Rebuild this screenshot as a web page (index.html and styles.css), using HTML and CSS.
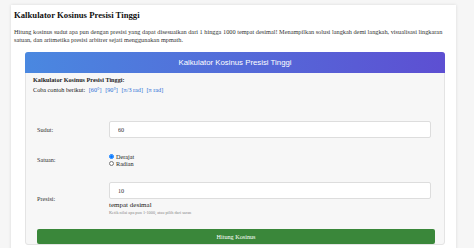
FILE: index.html
```html
<!DOCTYPE html>
<html lang="id">
<head>
<meta charset="UTF-8" />
<meta name="viewport" content="width=device-width, initial-scale=1" />
<title>Kalkulator Kosinus Presisi Tinggi</title>
<link rel="stylesheet" href="styles.css">
</head>
<body>

<div class="page">
  <h1>Kalkulator Kosinus Presisi Tinggi</h1>
  <p class="intro">Hitung kosinus sudut apa pun dengan presisi yang dapat disesuaikan dari 1 hingga 1000 tempat desimal! Menampilkan solusi langkah demi langkah, visualisasi lingkaran satuan, dan aritmetika presisi arbitrer sejati menggunakan mpmath.</p>

  <div class="calc">
    <div class="calc-head">Kalkulator Kosinus Presisi Tinggi</div>
    <div class="calc-body">
      <p class="hint">
        <strong>Kalkulator Kosinus Presisi Tinggi:</strong><br>
        Coba contoh berikut: <a href="#">[60°]</a> <a href="#">[90°]</a> <a href="#">[π/3 rad]</a> <a href="#">[π rad]</a>
      </p>

      <form class="form">
        <div class="row">
          <label for="angle">Sudut:</label>
          <input id="angle" type="text" value="60">
        </div>
        <div class="row">
          <label>Satuan:</label>
          <div class="radios">
            <label class="radio"><input type="radio" name="unit" checked> Derajat</label>
            <label class="radio"><input type="radio" name="unit"> Radian</label>
          </div>
        </div>
        <div class="row">
          <label for="prec">Presisi:</label>
          <div>
            <input id="prec" type="text" value="10">
            <div class="unit">tempat desimal</div>
            <div class="small">Ketik nilai apa pun 1-1000, atau pilih dari saran</div>
          </div>
        </div>
        <button type="button" class="btn">Hitung Kosinus</button>
      </form>
    </div>
  </div>
</div>

</body>
</html>
```

FILE: styles.css
```css
body {
  margin: 0;
  padding: 5px 18px 0 11px;
  background-color: #f6f6f6;
  font-family: "Liberation Serif", "Times New Roman", serif;
  color: #222;
}
.page {
  background-color: #fff;
  box-shadow: 0 0 3px rgba(0, 0, 0, 0.12);
  padding: 4px 0 0 3px;
  min-height: 260px;
}
h1 {
  font-size: 8.7px;
  margin: 0 0 8px;
  padding-top: 1px;
  color: #111;
}
.intro {
  font-size: 6.3px;
  line-height: 8.3px;
  margin: 0 4px 7px 0;
  color: #333;
}
.calc {
  margin: 0 11px 0 11px;
  background-color: #f7f7f7;
  border: 1px solid #e4e4e4;
  border-radius: 3px;
}
.calc-head {
  height: 21px;
  line-height: 21px;
  margin: -1px -1px 0;
  border-radius: 3px 3px 0 0;
  background: linear-gradient(to right, #4a88e0, #5d4fd2);
  color: #fff;
  text-align: center;
  font-family: "Liberation Sans", Arial, sans-serif;
  font-size: 7.8px;
}
.calc-body {
  padding: 2px 11px 0 7px;
}
.hint {
  font-size: 6.2px;
  line-height: 10px;
  margin: 0 0 26px;
}
.hint a {
  color: #2a6fd6;
  text-decoration: none;
  margin-left: 2px;
}
.form {
  padding-left: 4px;
  font-size: 6.2px;
}
.row {
  display: grid;
  grid-template-columns: 72px 1fr;
  align-items: center;
  margin-bottom: 15px;
  padding-right: 2px;
}
.row > label {
  color: #333;
}
.row input[type="text"] {
  box-sizing: border-box;
  width: 100%;
  height: 17px;
  border: 1px solid #ddd;
  border-radius: 2px;
  padding: 0 8px;
  font-family: inherit;
  font-size: 6.2px;
  color: #333;
  background-color: #fff;
  display: block;
}
.radios {
  display: flex;
  flex-direction: column;
  line-height: 7px;
}
.radio {
  display: flex;
  align-items: center;
  gap: 1px;
}
.radio input {
  width: 5px;
  height: 5px;
  margin: 0 1px 0 0;
}
.unit {
  font-size: 7px;
  margin-top: 2px;
  line-height: 9px;
}
.small {
  font-size: 4.3px;
  color: #888;
  line-height: 6px;
}
.btn {
  display: block;
  width: calc(100% + 2px);
  height: 15px;
  margin: -2px 0 0;
  border: none;
  border-radius: 2px;
  background-color: #3a873a;
  color: #fff;
  font-family: inherit;
  font-size: 6.2px;
}
```
